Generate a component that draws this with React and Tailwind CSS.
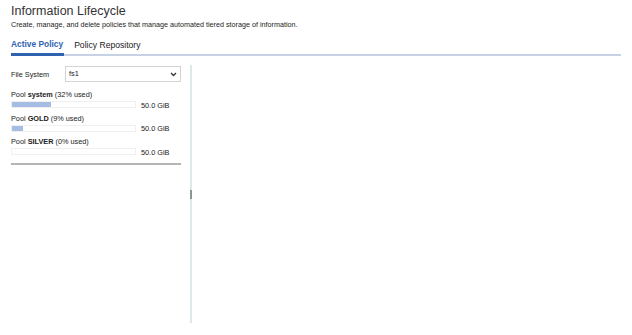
import React from "react";

const POOLS = [
    { name: "system", used: 32, size: "50.0 GiB" },
    { name: "GOLD", used: 9, size: "50.0 GiB" },
    { name: "SILVER", used: 0, size: "50.0 GiB" },
];

const App = () => {
    return (
        <div className="w-[632px] h-[335px] bg-white text-[#222] font-['Liberation_Sans',Arial,sans-serif] overflow-hidden">
            <div className="pl-[11px] pr-[11px] pt-[3px]">
                <h1 className="text-[12.5px] leading-[16px] text-[#333]">Information Lifecycle</h1>
                <p className="text-[7.2px] leading-[10px] mt-[1px] text-[#222]">
                    Create, manage, and delete policies that manage automated tiered storage of information.
                </p>
                <div className="flex items-end mt-[10px] border-b-2 border-[#c6d2e3] h-[16px]">
                    <div className="text-[8.4px] font-bold text-[#2f63b0] border-b-[3px] border-[#2f63b0] -mb-[2px] pb-[3px] pr-[1px] leading-[11px]">
                        Active Policy
                    </div>
                    <div className="text-[8.6px] text-[#222] ml-[10px] pb-[5px] -mb-[2px] leading-[11px]">Policy Repository</div>
                </div>
            </div>
            <div className="flex pl-[11px] mt-[9px] h-[258px]">
                <div className="w-[170px] flex flex-col">
                    <div className="flex items-center h-[16px] mt-[1px]">
                        <span className="text-[7.3px] w-[54px] mt-[3px]">File System</span>
                        <div className="flex-1 h-[16px] border border-[#d4d4d4] flex items-center justify-between px-[3px]">
                            <span className="text-[7.3px]">fs1</span>
                            <svg width="7" height="5" viewBox="0 0 7 5">
                                <path d="M1 1 L3.5 3.5 L6 1" stroke="#333" strokeWidth="1.3" fill="none" />
                            </svg>
                        </div>
                    </div>
                    <div className="mt-[8px] flex flex-col gap-[5.5px]">
                        {POOLS.map((p) => (
                            <div key={p.name}>
                                <div className="text-[7.3px] leading-[10px]">
                                    Pool <b>{p.name}</b> ({p.used}% used)
                                </div>
                                <div className="flex items-center mt-[1px] h-[7px]">
                                    <div className="w-[125px] h-[7px] border border-[#f0f0f0] bg-white">
                                        <div className="h-full bg-[#a5bde2]" style={{ width: `${p.used}%` }} />
                                    </div>
                                    <span className="text-[7.3px] leading-none ml-[5px] mt-[2px]">{p.size}</span>
                                </div>
                            </div>
                        ))}
                    </div>
                    <div className="mt-[8px] h-[2px] bg-[#b5b5b5]" />
                </div>
                <div className="ml-[9px] w-[2px] bg-[#dbe9eb] flex flex-col justify-center">
                    <div className="h-[9px] bg-[#8d9596]" />
                </div>
            </div>
        </div>
    );
};

export default App;
